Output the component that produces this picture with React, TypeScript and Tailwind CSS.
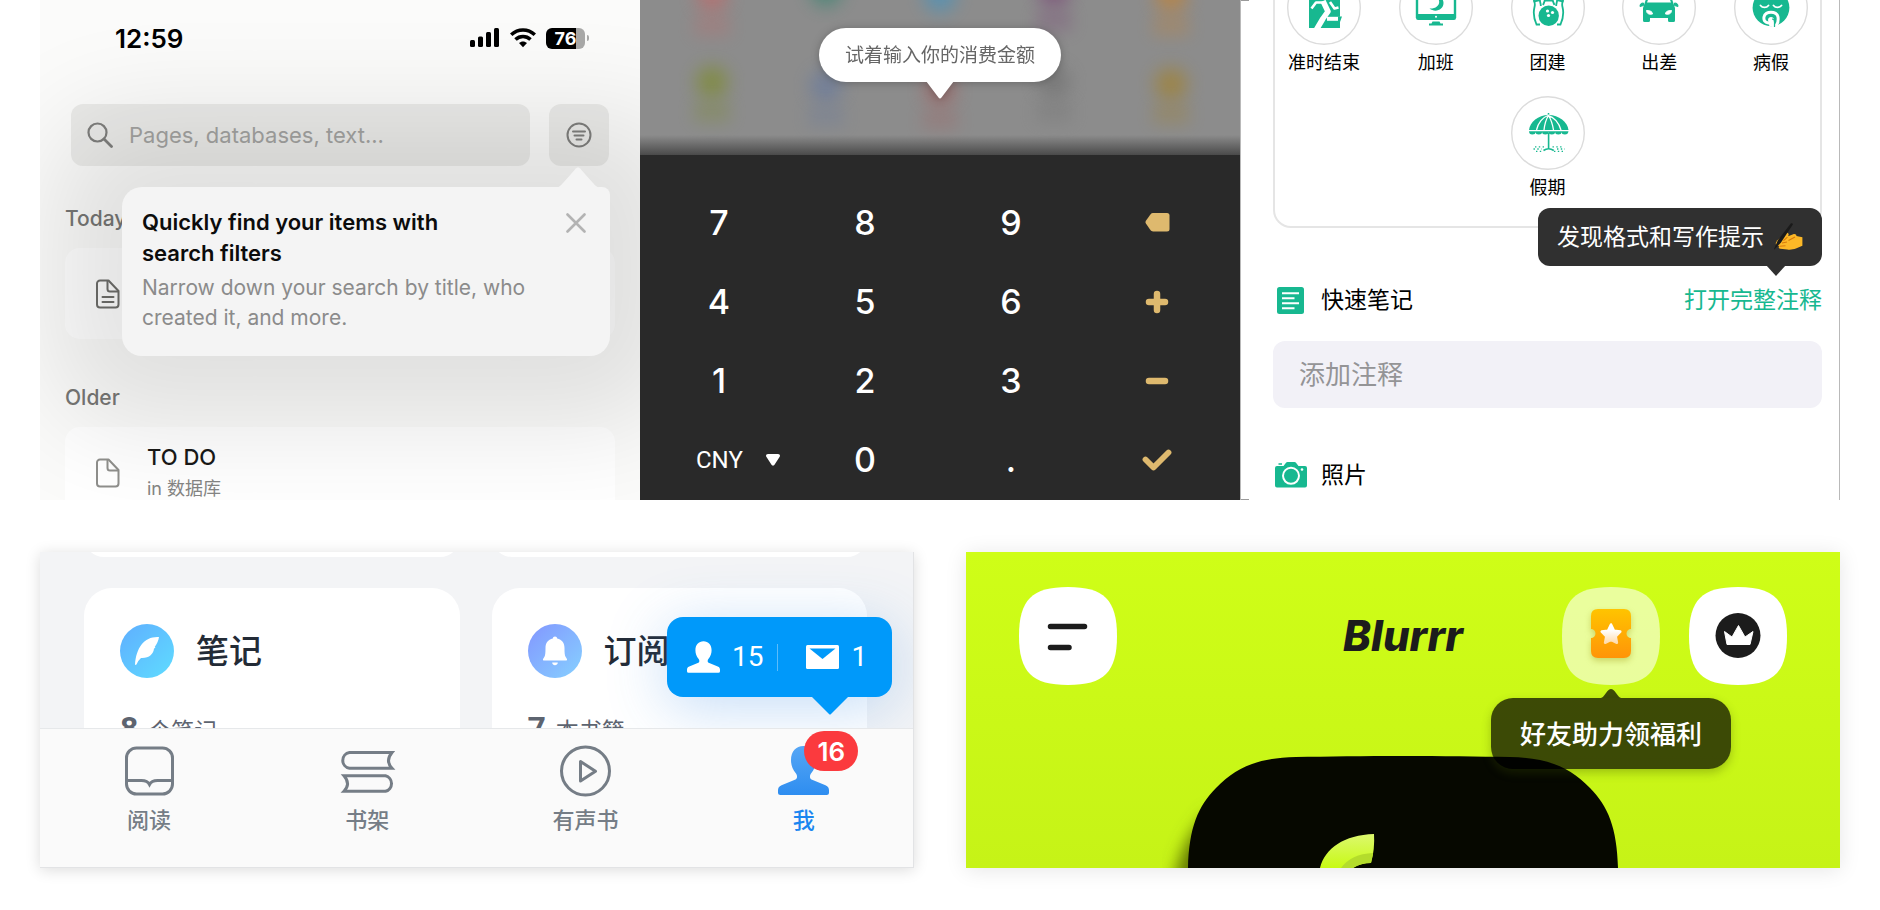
import type { ReactNode } from 'react';

const keyRows = [
  ['7', '8', '9', 'back'],
  ['4', '5', '6', 'plus'],
  ['1', '2', '3', 'minus'],
  ['cny', '0', '.', 'check'],
];

const blobs = [
  { left: '12%', top: -20, color: '#b96f6f', tall: true },
  { left: '31%', top: -26, color: '#3f8573', tall: false },
  { left: '50%', top: -20, color: '#4f93b8', tall: false },
  { left: '69%', top: -25, color: '#7d4f7a', tall: true },
  { left: '88.5%', top: -20, color: '#bd8440', tall: true },
  { left: '12%', top: 66, color: '#7f8c38', tall: true },
  { left: '31%', top: 70, color: '#6c7c9c', tall: true },
  { left: '50%', top: 74, color: '#a06a6a', tall: true },
  { left: '69%', top: 66, color: '#757575', tall: true },
  { left: '88.5%', top: 68, color: '#a08338', tall: true },
];

function DocIcon({ lines }: { lines?: boolean }) {
  return (
    <svg className="h-[30px] w-6 shrink-0" viewBox="0 0 24 30" fill="none" stroke={lines ? '#6f6f6c' : '#8f8f8c'} strokeWidth="2" strokeLinejoin="round" strokeLinecap="round">
      <path d="M4 1.5h8.5L22.5 12v13.500a3 3 0 0 1-3 3H4a3 3 0 0 1-3-3V4.500a3 3 0 0 1 3-3z" />
      <path d="M11.500 2v8a2.500 2.500 0 0 0 2.500 2.500h8" />
      {lines && <path d="M6.500 18h11M6.500 23h11" />}
    </svg>
  );
}

function SearchPanel() {
  return (
    <section className="relative overflow-hidden bg-[#fbfbfa] px-[25px] pt-[25px] font-[Inter,'Noto_Sans_CJK_SC',sans-serif]">
      <div className="flex h-[26px] items-center justify-between pr-[26px] pl-[50px]">
        <span className="text-[26px] font-semibold text-black">12:59</span>
        <div className="flex items-center gap-[10px]">
          <svg className="h-5 w-[30px]" viewBox="0 0 30 20">
            <rect x="0" y="12" width="5" height="7" rx="1.500" />
            <rect x="8" y="8.500" width="5" height="10.500" rx="1.500" />
            <rect x="16" y="4" width="5" height="15" rx="1.500" />
            <rect x="24" y="0" width="5" height="19" rx="1.500" />
          </svg>
          <svg className="h-5 w-[26px]" viewBox="0 0 26 20" fill="none" stroke="#000" strokeWidth="3.600">
            <path d="M1.200 6.800C8 .4 18 .4 24.800 6.800" />
            <path d="M5.500 11.500c4.300-4 10.700-4 15 0" />
            <path d="M9 15c2.300-2.100 5.700-2.100 8 0L13 19.200z" fill="#000" stroke="none" />
          </svg>
          <div className="flex items-center gap-[2px]">
            <div className="flex h-[21px] w-[39px] items-center justify-center rounded-[6px] bg-linear-to-r from-black from-76% to-[#a9a9a8] to-76% text-[18px] font-bold text-white">
              76
            </div>
            <span className="h-[6px] w-[2px] rounded-r bg-[#a9a9a8]" />
          </div>
        </div>
      </div>

      <div className="mt-[53px] flex gap-[19px] px-[6px]">
        <label className="flex h-[62px] min-w-0 flex-1 items-center gap-4 rounded-xl bg-[#ebebe9] px-4">
          <svg className="h-[26px] w-[26px] shrink-0" viewBox="0 0 26 26" fill="none" stroke="#7f7f7d" strokeWidth="2.200" strokeLinecap="round">
            <circle cx="10.500" cy="10.500" r="9" />
            <path d="M17 17l7.500 7.500" strokeWidth="2.800" />
          </svg>
          <input
            type="text"
            aria-label="Search"
            placeholder="Pages, databases, text..."
            className="min-w-0 flex-1 bg-transparent text-[22px] text-black outline-none placeholder:text-[#a3a3a1]"
          />
        </label>
        <div className="relative z-10">
          <button aria-label="Filters" className="flex h-[62px] w-[60px] items-center justify-center rounded-xl bg-[#ebebe9]">
            <svg className="h-[26px] w-[26px]" viewBox="0 0 26 26" fill="none" stroke="#7f7f7d" strokeWidth="2" strokeLinecap="round">
              <circle cx="13" cy="13" r="11.500" />
              <path d="M7 9.500h12M8.500 13.500h9M10.500 17.500h5" />
            </svg>
          </button>
          <div className="absolute top-[83px] -right-px flex w-[488px] rounded-[20px] rounded-tr-[8px] bg-[#f4f4f4] pt-5 pr-6 pb-5 pl-5 shadow-[0_0_110px_70px_rgba(0,0,0,0.11)]">
            <svg className="absolute -top-[20px] right-2 h-[21px] w-12" viewBox="0 0 48 21" fill="#f4f4f4">
              <path d="M0 21c5 0 7-3 9-5L21 2.500c2-2.600 4-2.600 6 0L39 16c2 2 4 5 9 5z" />
            </svg>
            <div className="flex-1">
              <h2 className="text-[22px] leading-[31px] font-semibold text-[#0c0c0c]">
                Quickly find your items with
                <br />
                search filters
              </h2>
              <p className="mt-1 pb-[3px] text-[21px] leading-[30px] whitespace-nowrap text-[#8b8b8b]">
                Narrow down your search by title, who
                <br />
                created it, and more.
              </p>
            </div>
            <button aria-label="Close" className="mt-[6px] h-5 w-5 shrink-0">
              <svg viewBox="0 0 20 20" fill="none" stroke="#b3b3b3" strokeWidth="2.600" strokeLinecap="round">
                <path d="M1.500 1.500l17 17M18.500 1.500l-17 17" />
              </svg>
            </button>
          </div>
        </div>
      </div>

      <h3 className="mt-[38px] text-[21px] leading-[30px] font-medium text-[#777775]">Today</h3>
      <div className="mt-[14px] flex h-[91px] items-center rounded-[15px] bg-white pl-[31px]">
        <DocIcon lines />
      </div>

      <h3 className="mt-11 text-[21px] leading-[30px] font-medium text-[#777775]">Older</h3>
      <a href="#todo" className="mt-[14px] -mb-[18px] flex h-[91px] items-center gap-[27px] rounded-[15px] bg-white pl-[31px]">
        <DocIcon />
        <div className="leading-[31px]">
          <div className="text-[22px] font-medium text-[#191917]">TO DO</div>
          <div className="text-[18px] text-[#858583]">in 数据库</div>
        </div>
      </a>
    </section>
  );
}

function KeyLabel({ name }: { name: string }) {
  if (name === 'back') {
    return (
      <svg className="h-[19px] w-[25px]" viewBox="0 0 25 19" fill="#deb96e">
        <path d="M8 0h14a2.500 2.500 0 0 1 2.500 2.500v13.500A2.500 2.500 0 0 1 22 18.500H8c-1 0-1.800-.5-2.400-1.200L.9 10.600c-.6-.9-.6-1.900 0-2.800l4.700-6.600C6.200.5 7 0 8 0z" />
      </svg>
    );
  }
  if (name === 'plus' || name === 'minus') {
    return (
      <svg className="h-6 w-6" viewBox="0 0 24 24" stroke="#deb96e" strokeWidth="6.500" strokeLinecap="round">
        <path d={name === 'plus' ? 'M4 12h16M12 4v16' : 'M4 12h16'} />
      </svg>
    );
  }
  if (name === 'check') {
    return (
      <svg className="h-[22px] w-[30px]" viewBox="0 0 30 22" fill="none" stroke="#deb96e" strokeWidth="5.800" strokeLinecap="round" strokeLinejoin="round">
        <path d="M3.500 10.500l8 8L26.500 3.500" />
      </svg>
    );
  }
  return <>{name}</>;
}

function KeypadPanel() {
  return (
    <section className="flex flex-col overflow-hidden bg-[#292929] font-[Inter,'Noto_Sans_CJK_SC',sans-serif]">
      <div className="relative h-[155px] overflow-hidden bg-[#8c8c8c]">
        {blobs.map((blob, index) => (
          <div key={index} className="absolute flex -translate-x-1/2 flex-col items-center" style={{ left: blob.left, top: blob.top }}>
            <span className="h-8 w-8 rounded-full opacity-80 blur-[9px]" style={{ background: blob.color }} />
            {blob.tall && <span className="mt-1 h-5 w-9 opacity-35 blur-[8px]" style={{ background: blob.color }} />}
          </div>
        ))}
        <div className="absolute inset-x-0 bottom-0 h-5 bg-linear-to-b from-transparent to-[#4a4a4a]" />
        <div className="absolute top-7 left-1/2 -translate-x-1/2 drop-shadow-[0_1px_4px_rgba(0,0,0,0.25)]">
          <p className="rounded-full bg-white px-[26px] pt-px text-[19px] leading-[53px] whitespace-nowrap text-[#666]">试着输入你的消费金额</p>
          <svg className="absolute top-[53px] left-1/2 h-[18px] w-7 -translate-x-1/2" viewBox="0 0 28 18" fill="#fff">
            <path d="M0 0h28L15.500 16.500q-1.500 2-3 0z" />
          </svg>
        </div>
      </div>
      <div className="grid grid-cols-4 pt-7 pr-[10px] pl-[6px]">
        {keyRows.flat().map((name) =>
          name === 'cny' ? (
            <div key={name} className="relative flex h-[79px] items-center pl-[50px]">
              <select aria-label="Currency" className="w-[84px] appearance-none bg-transparent font-[Roboto,sans-serif] text-[24px] text-white">
                <option>CNY</option>
              </select>
              <svg className="pointer-events-none absolute left-[120px] h-3 w-[14px]" viewBox="0 0 14 12" fill="#fff">
                <path d="M2 0h10c1.800 0 2.500 1.700 1.500 3L8.500 10.700c-.8 1.200-2.200 1.200-3 0L.5 3C-.5 1.700.2 0 2 0z" />
              </svg>
            </div>
          ) : (
            <button key={name} aria-label={name} className="flex h-[79px] items-center justify-center text-[34px] font-medium text-white">
              <KeyLabel name={name} />
            </button>
          ),
        )}
      </div>
    </section>
  );
}

const GREEN = '#17b890';

const leaveTypes: { label: string; drawing: ReactNode }[] = [
  {
    label: '准时结束',
    drawing: (
      <>
        <path d="M22 18h31v39H22z" fill={GREEN} />
        <g fill="none" stroke="#fff" strokeLinejoin="round">
          <path d="M24.500 37.500l4.500-6h9" strokeWidth="2.600" />
          <path d="M36 30l5 10.500-5 7-6.500 11" strokeWidth="5.500" />
          <path d="M43 31l4.500 6.500 4-1" strokeWidth="2.600" />
          <path d="M40 47.800h13.500" strokeWidth="4" />
        </g>
        <path d="M51 45.500h4l-2 5.500h-2z" fill={GREEN} />
      </>
    ),
  },
  {
    label: '加班',
    drawing: (
      <>
        <path d="M18 20v27M56 20v27" stroke={GREEN} strokeWidth="2.400" />
        <path d="M17 43h40v4a2 2 0 0 1-2 2H19a2 2 0 0 1-2-2z" fill={GREEN} />
        <circle cx="37" cy="45.800" r="1" fill="#fff" />
        <path d="M36 25c7.500 4 4.500 13-5.500 12.500 5.500 4.500 14 1.500 14-5.500 0-4-3-7-8.500-7z" fill={GREEN} />
        <path d="M33.500 50.500h7l1 2h2.500v2H30v-2h2.500z" fill={GREEN} />
      </>
    ),
  },
  {
    label: '团建',
    drawing: (
      <>
        <g fill="none" stroke={GREEN} strokeWidth="1.800">
          <path d="M22 25c0 4 3 6 1.500 11-1.500 6-.500 12 2 17.500h3.500M29 25c-1 5 1 7 .800 10" />
          <path d="M53 25c0 4-3 6-1.500 11 1.500 6 .500 12-2 17.500H46M46 25c1 5-1 7-.800 10" />
          <path d="M34.500 24c0 5-1 7-2.500 10M41 24c0 5 1 7 2.500 10" />
          <path d="M33.500 29.500h8.500M22.500 30.500l6.500-1.500M52.500 30.500l-6.500-1.500" />
        </g>
        <circle cx="37.700" cy="44.800" r="11.200" fill="#fff" />
        <circle cx="37.700" cy="44.800" r="10.200" fill={GREEN} />
        <circle cx="36.500" cy="40" r="1.600" fill="#fff" />
        <circle cx="41.500" cy="41.500" r="1.600" fill="#fff" />
        <circle cx="37.500" cy="44.500" r="1.600" fill="#fff" />
      </>
    ),
  },
  {
    label: '出差',
    drawing: (
      <>
        <path d="M26 22h22l5 15v12.500q0 1.500-1.500 1.500h-4q-1.500 0-1.500-1.500V47H28v2.500q0 1.500-1.500 1.500h-4q-1.500 0-1.500-1.500V37z" fill={GREEN} />
        <path d="M28.500 22h17l3.500 9.500H25z" fill="#fff" />
        <path d="M18 35.500c0-2.500 1-3.500 3.500-3.500v2.500zM56 35.500c0-2.500-1-3.500-3.500-3.500v2.500z" fill={GREEN} stroke={GREEN} />
        <path d="M24.500 39.500c3.500 0 6 1 6 3.500-3.500.800-6-.500-6-3.500zM49.500 39.500c-3.500 0-6 1-6 3.500 3.500.800 6-.500 6-3.500z" fill="#fff" stroke="#fff" />
      </>
    ),
  },
  {
    label: '病假',
    drawing: (
      <>
        <circle cx="37" cy="36.800" r="18.400" fill={GREEN} />
        <g fill="none" stroke="#fff" strokeWidth="1.800" strokeLinecap="round">
          <path d="M26.500 34.500c2 2.500 6 2.500 8 0M39.500 34.500c2 2.500 6 2.500 8 0" />
          <path d="M34.500 52c-4-.500-5-3-4.500-6 1-6.500 13-6.500 14 0 .400 3 0 6-1.500 8" strokeWidth="3" />
        </g>
        <path d="M34 49c0-4 6-4 6 0v6.500h-4.500z" fill="#fff" />
        <path d="M38 48c2 0 2.500 1 2.500 3v5" fill="none" stroke={GREEN} strokeWidth="1.200" />
      </>
    ),
  },
  {
    label: '假期',
    drawing: (
      <>
        <path d="M37.500 17v3" stroke={GREEN} strokeWidth="1.500" />
        <path d="M18 34c1-8 9-15 19.500-15S56.500 26 57.500 34z" fill={GREEN} />
        <path d="M18 35q0 3.500 3.300 3.500t3.300-2.500q0 2.500 3.200 2.500t3.300-2.500q0 2.500 3.200 2.500t3.300-2.500q0 2.500 3.200 2.500t3.300-2.500q0 2.500 3.200 2.500t3.300-2.500q0 2.500 3.300 2.500T57.500 35z" fill={GREEN} />
        <path d="M25.500 34C27 27 32 21 37 19.500 43 21 48 27 50 34M33 34q1-9 4.500-14.500Q41 25 42.500 34M17.500 34.700h40.500" fill="none" stroke="#fff" strokeWidth="1.300" />
        <path d="M37.600 37v16.500M32.500 54.500q5-3.500 10.300 0" fill="none" stroke={GREEN} strokeWidth="1.600" />
        <path d="M24 50.800h10M41.500 50.800h11M22.500 53h8M46 53h8M25 55.300h7M43 55.300h10" stroke={GREEN} strokeWidth="1.300" strokeDasharray="1.400 2.400" />
      </>
    ),
  },
];

function LeaveButton({ label, drawing }: { label: string; drawing: ReactNode }) {
  return (
    <button className="w-[74px]">
      <svg className="block h-[74px] w-[74px]" viewBox="0 0 74 74">
        <circle cx="37" cy="37" r="36.300" fill="#fff" stroke="#dcdcdc" strokeWidth="1.400" />
        {drawing}
      </svg>
      <span className="mt-[6px] block text-[18px] leading-6 whitespace-nowrap text-black">{label}</span>
    </button>
  );
}

function WritingHand() {
  return (
    <svg className="h-[28px] w-[30px]" viewBox="0 0 29 28" role="img" aria-label="writing hand">
      <path d="M3 18L11.500 10.500c1.500-1.300 3.500-.5 3.700.8l-.5 2 5-2c2-.6 3.400.4 3.200 1.800l6 1.200v8.500l-6.500 2.700c-2.500 1-6 1.500-8.600 1l-7-.8c-1.800-.3-2-1.800-1-2.700l-2.300-.5c-1.500-.5-1.800-3 0-4.500z" fill="#fcb827" />
      <path d="M14 14.200l-4 3.500M21.500 14l-6.500 3.500M6 23.300l6-.5M8.500 20l5-1" stroke="#d97a0c" strokeWidth="1.100" fill="none" />
      <path d="M17.500.300q1.500-.5 2 1L7.500 19.500 1 26.500.500 26 4.500 17z" fill="#1a1a1a" />
    </svg>
  );
}

function NotesPanel() {
  return (
    <section className="relative overflow-hidden border-x border-[#b9b9b9] bg-white pr-[17px] pl-8 font-[Inter,'Noto_Sans_CJK_SC',sans-serif]">
      <span className="absolute top-0 left-0 h-px w-2 bg-[#9a9a9a]" />
      <span className="absolute bottom-0 left-0 h-px w-2 bg-[#9a9a9a]" />
      <div className="-mt-10 rounded-[18px] border-2 border-[#e5e5e5] px-3 pt-[9px] pb-[26px]">
        <div className="flex justify-between">
          {leaveTypes.slice(0, 5).map((item) => (
            <LeaveButton key={item.label} {...item} />
          ))}
        </div>
        <div className="mt-[21px] flex justify-center">
          {leaveTypes.slice(5).map((item) => (
            <LeaveButton key={item.label} {...item} />
          ))}
        </div>
      </div>

      <div className="mt-[57px] flex items-center justify-between pl-1 text-[23px] leading-[30px]">
        <label htmlFor="note" className="flex items-center gap-[17px] text-black">
          <svg className="h-[27px] w-[27px]" viewBox="0 0 27 27">
            <rect width="27" height="27" rx="2.500" fill={GREEN} />
            <path d="M5 6.300h17M5 11.300h12.500M5 16.300h17M5 21.300h12.500" stroke="#fff" strokeWidth="2" />
          </svg>
          快速笔记
        </label>
        <div className="relative">
          <a href="#full-note" className="text-[#17b890]">
            打开完整注释
          </a>
          <div className="absolute right-0 bottom-full mb-[19px] flex h-[58px] items-center gap-[9px] rounded-xl bg-[#303030] pr-[19px] pl-[19px] whitespace-nowrap text-white">
            发现格式和写作提示
            <WritingHand />
            <svg className="absolute top-[57px] right-9 h-[11px] w-5" viewBox="0 0 20 11" fill="#303030">
              <path d="M0 0h20L10 11z" />
            </svg>
          </div>
        </div>
      </div>
      <input
        id="note"
        type="text"
        placeholder="添加注释"
        className="mt-[26px] block h-[67px] w-full rounded-xl bg-[#f2f1f7] px-[26px] text-[26px] text-black outline-none placeholder:text-[#949496]"
      />
      <div className="mt-[52px] flex items-center gap-[14px] pb-[10px] pl-[2px] text-[23px] leading-[30px] text-black">
        <svg className="h-[26px] w-8" viewBox="0 0 32 26">
          <path d="M2 4h6.500L11 .8Q11.500 0 12.500 0h7Q20.500 0 21 .8L23.500 4H30a2 2 0 0 1 2 2v17.500a2 2 0 0 1-2 2H2a2 2 0 0 1-2-2V6a2 2 0 0 1 2-2zM3.500 1.300H7v1.400H3.500z" fill={GREEN} />
          <circle cx="16" cy="13.800" r="8" fill="none" stroke="#fff" strokeWidth="2" />
          <circle cx="27" cy="7.500" r="1.300" fill="#fff" />
        </svg>
        照片
      </div>
    </section>
  );
}

const PERSON = 'M25.500 0C33 0 38 5.500 38 14c0 5-1.500 9.500-5 13.500-1.500 1.800-1.500 5 .5 6l14 5.800c2.500 1 3.500 2.700 3.500 5v2.200q0 2.500-2.500 2.500h-46Q0 49 0 46.500v-2.200c0-2.300 1-4 3.500-5l14-5.800c2-1 2-4.200.5-6-3.500-4-5-8.500-5-13.500C13 5.500 18 0 25.500 0z';

const shelves = [
  {
    title: '笔记',
    count: '8',
    unit: '个笔记',
    gradient: 'bg-linear-to-br from-[#5faeff] to-[#5fdcff]',
    icon: <path d="M39 13C25 12 16 23 15 41l1.500-.5q1.500-4 4.500-6.500c8 .5 12.500-4 13-9.500l1.500-.8-.8-.7c2-3 4-6.500 4.300-10z" fill="#fff" />,
  },
  {
    title: '订阅',
    count: '7',
    unit: '本书籍',
    gradient: 'bg-linear-to-br from-[#8296ff] to-[#86d0ff]',
    icon: (
      <path d="M27 12.500c1.400 0 2 .8 2.200 2 4.800 1.200 7.300 4.500 7.300 9.500 0 5 .2 7.500 1.200 9l1.100 1.700c.6 1 .2 1.800-1 1.800H16.200c-1.200 0-1.600-.8-1-1.800l1.100-1.700c1-1.500 1.200-4 1.200-9 0-5 2.500-8.300 7.300-9.500.2-1.200.8-2 2.200-2zM24.200 38.500h5.600c0 3.500-5.600 3.500-5.600 0z" fill="#fff" />
    ),
  },
];

const tabs: { label: string; icon: ReactNode }[] = [
  {
    label: '阅读',
    icon: (
      <g fill="none" stroke="#757d86" strokeWidth="3">
        <rect x="2.500" y="2" width="46" height="46" rx="10" />
        <path d="M2.500 34.500h15q6 0 8 4 2-4 8-4h15" />
      </g>
    ),
  },
  {
    label: '书架',
    icon: (
      <g fill="none" stroke="#757d86" strokeWidth="3">
        <path d="M50 6.500H7.500a8 8 0 0 0 0 15.800H50q-7-7.500 0-15.800z" />
        <path d="M2 29.800h41.500a8 8 0 0 1 0 15.500H2q7-7.500 0-15.500z" />
      </g>
    ),
  },
  {
    label: '有声书',
    icon: (
      <g fill="none" stroke="#757d86" strokeWidth="3" strokeLinejoin="round">
        <circle cx="25.500" cy="25" r="24" />
        <path d="M20.500 15.500v19.500L35.500 25.300z" />
      </g>
    ),
  },
  {
    label: '我',
    icon: (
      <>
        <defs>
          <linearGradient id="me" x1="0" y1="0" x2="0" y2="1">
            <stop offset="0" stopColor="#55a6f5" />
            <stop offset="1" stopColor="#2e8df0" />
          </linearGradient>
        </defs>
        <path d={PERSON} fill="url(#me)" />
      </>
    ),
  },
];

function ReaderPanel() {
  return (
    <section className="overflow-hidden border-r border-b border-[#e2e3e5] bg-[#f3f4f6] font-[Inter,'Noto_Sans_CJK_SC',sans-serif] shadow-[0_2px_14px_rgba(0,0,0,0.14)]">
      <div className="relative h-[176px] overflow-hidden pr-[46px] pl-11">
        <div className="grid grid-cols-2 gap-8">
          {shelves.map((shelf) => (
            <div key={shelf.title}>
              <div className="-mt-[35px] h-10 rounded-[28px] bg-white" />
              <div className="mt-[31px] h-[180px] rounded-[28px] bg-white px-9 pt-9">
                <div className="flex items-center gap-[22px]">
                  <span className={'h-[54px] w-[54px] rounded-full ' + shelf.gradient}>
                    <svg viewBox="0 0 54 54">{shelf.icon}</svg>
                  </span>
                  <h3 className="text-[33px] leading-[54px] font-medium text-[#232b36]">{shelf.title}</h3>
                </div>
                <p className="mt-8 flex items-baseline gap-[10px] leading-9 text-[#5d6470]">
                  <b className="font-[Roboto,sans-serif] text-[32px]">{shelf.count}</b>
                  <span className="text-[23px]">{shelf.unit}</span>
                </p>
              </div>
            </div>
          ))}
        </div>
        <div className="absolute top-[65px] right-[21px] flex h-20 w-[225px] items-center rounded-2xl bg-[#0099fa] pl-5 font-[Roboto,sans-serif] text-[28px] text-white shadow-[0_10px_60px_rgba(60,140,230,0.3)]">
          <svg className="h-8 w-[33px]" viewBox="0 0 51 49" fill="#fff">
            <path d={PERSON} />
          </svg>
          <span className="ml-3">15</span>
          <span className="ml-[14px] h-[27px] w-px bg-[#5cbcfb]" />
          <svg className="ml-7 h-6 w-[33px]" viewBox="0 0 33 24">
            <rect width="33" height="24" rx="1.500" fill="#fff" />
            <path d="M3.500 3.500h26L16.500 14z" fill="#0099fa" />
          </svg>
          <span className="ml-3">1</span>
          <svg className="absolute top-[79px] right-[43px] h-[19px] w-[38px]" viewBox="0 0 38 19" fill="#0099fa">
            <path d="M0 0h38L20 18q-1 1-2 0z" />
          </svg>
        </div>
      </div>
      <nav className="grid grid-cols-4 border-t border-[#e6e8ea] bg-[#fafafa] pt-[17px] pb-[31px]">
        {tabs.map((tab, index) => (
          <a key={tab.label} href="#tab" className="flex flex-col items-center">
            <span className="relative">
              <svg className="block h-[50px] w-[51px]" viewBox="0 0 51 50" overflow="visible">
                {tab.icon}
              </svg>
              {index === 3 && (
                <span className="absolute -top-[15px] left-[26px] flex h-10 w-[54px] items-center justify-center rounded-full bg-[#fb3a3e] text-[26px] font-semibold text-white">
                  16
                </span>
              )}
            </span>
            <span className={index === 3 ? 'mt-2 text-[22px] leading-8 font-medium text-[#1a86f0]' : 'mt-2 text-[22px] leading-8 font-medium text-[#757d86]'}>
              {tab.label}
            </span>
          </a>
        ))}
      </nav>
    </section>
  );
}

// Rounded-square outline shared by the three toolbar buttons
const SQUIRCLE = 'M49 0C85 0 98 13 98 49S85 98 49 98 0 85 0 49 13 0 49 0z';

function SquircleButton({ label, fill, children }: { label: string; fill: string; children: ReactNode }) {
  return (
    <button aria-label={label} className="block h-[98px] w-[98px]">
      <svg viewBox="0 0 98 98" overflow="visible">
        <path d={SQUIRCLE} fill={fill} />
        {children}
      </svg>
    </button>
  );
}

function BlurrrPanel() {
  return (
    <section className="relative overflow-hidden bg-linear-to-b from-[#cffe17] to-[#c6f317] shadow-[0_2px_20px_rgba(0,0,0,0.1)]">
      <header className="relative flex items-center justify-between px-[53px] pt-[35px]">
        <SquircleButton label="Menu" fill="#fff">
          <path d="M31.500 39.500h34M31.500 60.500h18.500" stroke="#1c1c1c" strokeWidth="5.500" strokeLinecap="round" />
        </SquircleButton>
        <h1 className="absolute left-1/2 -translate-x-1/2 font-[Inter,sans-serif] text-[42px] leading-[98px] font-extrabold text-[#1c1c1c] italic">Blurrr</h1>
        <div className="flex gap-[29px]">
          <div className="relative z-10">
            <SquircleButton label="Rewards" fill="rgba(255,255,255,0.58)">
              <defs>
                <linearGradient id="ticket" x1="0" y1="0" x2="0" y2="1">
                  <stop offset="0" stopColor="#ffc400" />
                  <stop offset="1" stopColor="#ff9408" />
                </linearGradient>
                <linearGradient id="star" x1="0" y1="0" x2="0" y2="1">
                  <stop offset="0.300" stopColor="#fff" />
                  <stop offset="1" stopColor="#ffdcae" />
                </linearGradient>
              </defs>
              <path
                d="M36 22h26q7 0 7 7v13a4.500 4.500 0 0 0 0 9v13q0 7-7 7H36q-7 0-7-7V51a4.500 4.500 0 0 0 0-9V29q0-7 7-7z"
                fill="url(#ticket)"
                className="drop-shadow-[0_3px_3px_rgba(150,140,0,0.35)]"
              />
              <path
                d="M49 37.500l3 6.200 6.300.9-4.600 4.700 1.200 6.500-5.900-2.900-5.900 2.900 1.200-6.500-4.600-4.700 6.300-.9z"
                fill="url(#star)"
                stroke="url(#star)"
                strokeWidth="2.500"
                strokeLinejoin="round"
              />
            </SquircleButton>
            <div className="absolute top-[111px] left-1/2 w-60 -translate-x-1/2 rounded-[22px] bg-black/70 pb-[2px] text-center font-['Noto_Sans_CJK_SC',sans-serif] text-[26px] leading-[69px] font-medium text-white shadow-[0_4px_10px_rgba(60,80,0,0.3)]">
              好友助力领福利
              <svg className="absolute -top-[9px] left-1/2 h-[9px] w-5 -translate-x-1/2" viewBox="0 0 20 9" fill="rgba(0,0,0,0.7)">
                <path d="M0 9q2-.5 3.500-3L6.500 2q3.500-4 7 0l3 4Q18 8.500 20 9z" />
              </svg>
            </div>
          </div>
          <SquircleButton label="Premium" fill="#fff">
            <circle cx="49" cy="48.500" r="22.500" fill="#1c1c1c" />
            <path d="M35.500 44.500l7.500 5.500 6.500-11.500L56 50l8-5.500L61 57.500H38z" fill="#fff" stroke="#fff" strokeWidth="1" strokeLinejoin="round" />
          </SquircleButton>
        </div>
      </header>
      <svg className="absolute bottom-0 left-1/2 h-28 w-[430px] -translate-x-1/2" viewBox="0 0 430 112" overflow="visible">
        <defs>
          <filter id="soft" x="-30%" y="-30%" width="160%" height="160%">
            <feGaussianBlur stdDeviation="8" />
          </filter>
          <linearGradient id="mark" x1="0" y1="0" x2="0" y2="1">
            <stop offset="0" stopColor="#dcf86e" />
            <stop offset="1" stopColor="#c8fa14" />
          </linearGradient>
        </defs>
        <path d="M-14 130Q-8 84 24 54V130z" fill="#5f7400" filter="url(#soft)" />
        <path d="M0 112C1 72 10 50 28 32 48 11 70 2 108 1 170-.500 260-.500 322 1 360 2 382 11 402 32 420 50 429 72 430 112z" fill="#060800" />
        <path d="M132 112c5-20 24-33 54-34q1 15-3 29-10 0-18 5z" fill="url(#mark)" />
        <path d="M153 112q10-14 32-15l-2 10q-10 0-18 5z" fill="#b4dc2c" />
      </svg>
    </section>
  );
}

export default function App() {
  return (
    <main className="min-h-screen bg-white px-10 pb-[42px]">
      <div className="grid grid-cols-3">
        <SearchPanel />
        <KeypadPanel />
        <NotesPanel />
      </div>
      <div className="mt-[52px] grid grid-cols-2 gap-[52px]">
        <ReaderPanel />
        <BlurrrPanel />
      </div>
    </main>
  );
}
